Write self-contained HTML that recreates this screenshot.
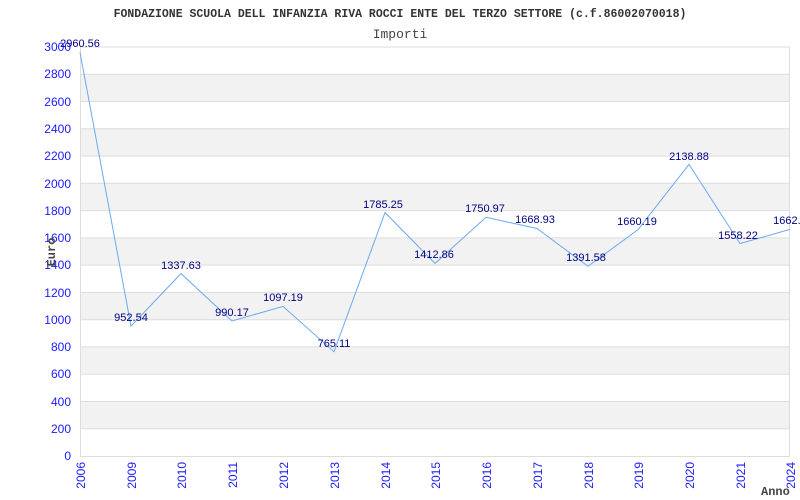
<!DOCTYPE html>
<html><head><meta charset="utf-8"><style>
html,body{margin:0;padding:0;background:#fff;width:800px;height:500px;overflow:hidden}
svg{display:block}
</style></head><body>
<svg width="800" height="500" xmlns="http://www.w3.org/2000/svg">
<text x="400" y="17" text-anchor="middle" font-family="Liberation Mono, monospace" font-size="11.5" font-weight="bold" fill="#333">FONDAZIONE SCUOLA DELL INFANZIA RIVA ROCCI ENTE DEL TERZO SETTORE (c.f.86002070018)</text>
<text x="400" y="38" text-anchor="middle" font-family="Liberation Mono, monospace" font-size="13" fill="#444">Importi</text>
<g fill="#f2f2f2">
<rect x="80" y="74.3" width="710" height="27.3"/>
<rect x="80" y="128.8" width="710" height="27.3"/>
<rect x="80" y="183.3" width="710" height="27.3"/>
<rect x="80" y="237.9" width="710" height="27.3"/>
<rect x="80" y="292.4" width="710" height="27.3"/>
<rect x="80" y="346.9" width="710" height="27.3"/>
<rect x="80" y="401.5" width="710" height="27.3"/>
</g>
<g stroke="#ddd" stroke-width="1">
<line x1="80" y1="47" x2="790" y2="47"/><line x1="80" y1="74.3" x2="790" y2="74.3"/><line x1="80" y1="101.5" x2="790" y2="101.5"/><line x1="80" y1="128.8" x2="790" y2="128.8"/><line x1="80" y1="156.1" x2="790" y2="156.1"/><line x1="80" y1="183.3" x2="790" y2="183.3"/><line x1="80" y1="210.6" x2="790" y2="210.6"/><line x1="80" y1="237.9" x2="790" y2="237.9"/><line x1="80" y1="265.1" x2="790" y2="265.1"/><line x1="80" y1="292.4" x2="790" y2="292.4"/><line x1="80" y1="319.7" x2="790" y2="319.7"/><line x1="80" y1="346.9" x2="790" y2="346.9"/><line x1="80" y1="374.2" x2="790" y2="374.2"/><line x1="80" y1="401.5" x2="790" y2="401.5"/><line x1="80" y1="428.7" x2="790" y2="428.7"/>
<line x1="80.5" y1="47" x2="80.5" y2="456"/><line x1="789.5" y1="47" x2="789.5" y2="456"/><line x1="80" y1="456.5" x2="790" y2="456.5"/>
</g>
<g font-family="Liberation Sans, sans-serif" font-size="12" fill="#1a1aff" text-anchor="end">
<text x="71" y="51">3000</text><text x="71" y="78">2800</text><text x="71" y="106">2600</text><text x="71" y="133">2400</text><text x="71" y="160">2200</text><text x="71" y="188">2000</text><text x="71" y="215">1800</text><text x="71" y="242">1600</text><text x="71" y="269">1400</text><text x="71" y="297">1200</text><text x="71" y="324">1000</text><text x="71" y="351">800</text><text x="71" y="378">600</text><text x="71" y="406">400</text><text x="71" y="433">200</text><text x="71" y="460">0</text>
</g>
<text transform="translate(55,252) rotate(-90)" text-anchor="middle" font-family="Liberation Mono, monospace" font-size="12" font-weight="bold" fill="#444">Euro</text>
<g font-family="Liberation Sans, sans-serif" font-size="12" fill="#1a1aff" text-anchor="end">
<text transform="translate(85,462) rotate(-90)">2006</text>
<text transform="translate(136,462) rotate(-90)">2009</text>
<text transform="translate(186,462) rotate(-90)">2010</text>
<text transform="translate(237,462) rotate(-90)">2011</text>
<text transform="translate(288,462) rotate(-90)">2012</text>
<text transform="translate(339,462) rotate(-90)">2013</text>
<text transform="translate(390,462) rotate(-90)">2014</text>
<text transform="translate(440,462) rotate(-90)">2015</text>
<text transform="translate(491,462) rotate(-90)">2016</text>
<text transform="translate(542,462) rotate(-90)">2017</text>
<text transform="translate(593,462) rotate(-90)">2018</text>
<text transform="translate(643,462) rotate(-90)">2019</text>
<text transform="translate(694,462) rotate(-90)">2020</text>
<text transform="translate(745,462) rotate(-90)">2021</text>
<text transform="translate(795,462) rotate(-90)">2024</text>
</g>
<text x="761" y="495" font-family="Liberation Mono, monospace" font-size="12" font-weight="bold" fill="#444">Anno</text>
<polyline fill="none" stroke="#6aaaf0" stroke-width="1" points="80,52.4 131,326.1 181,273.6 232,321 283,306.4 334,351.7 385,212.6 435,263.4 486,217.3 537,228.5 588,266.3 638,229.7 689,164.4 740,243.6 790,229.4"/>
<g font-family="Liberation Sans, sans-serif" font-size="11" fill="#000080" text-anchor="middle">
<text x="80" y="47">2960.56</text>
<text x="131" y="321">952.54</text>
<text x="181" y="269">1337.63</text>
<text x="232" y="316">990.17</text>
<text x="283" y="301">1097.19</text>
<text x="334" y="347">765.11</text>
<text x="383" y="208">1785.25</text>
<text x="434" y="258">1412.86</text>
<text x="485" y="212">1750.97</text>
<text x="535" y="223">1668.93</text>
<text x="586" y="261">1391.58</text>
<text x="637" y="225">1660.19</text>
<text x="689" y="160">2138.88</text>
<text x="738" y="239">1558.22</text>
<text x="790" y="224">1662.4</text>
</g>
</svg>
</body></html>
